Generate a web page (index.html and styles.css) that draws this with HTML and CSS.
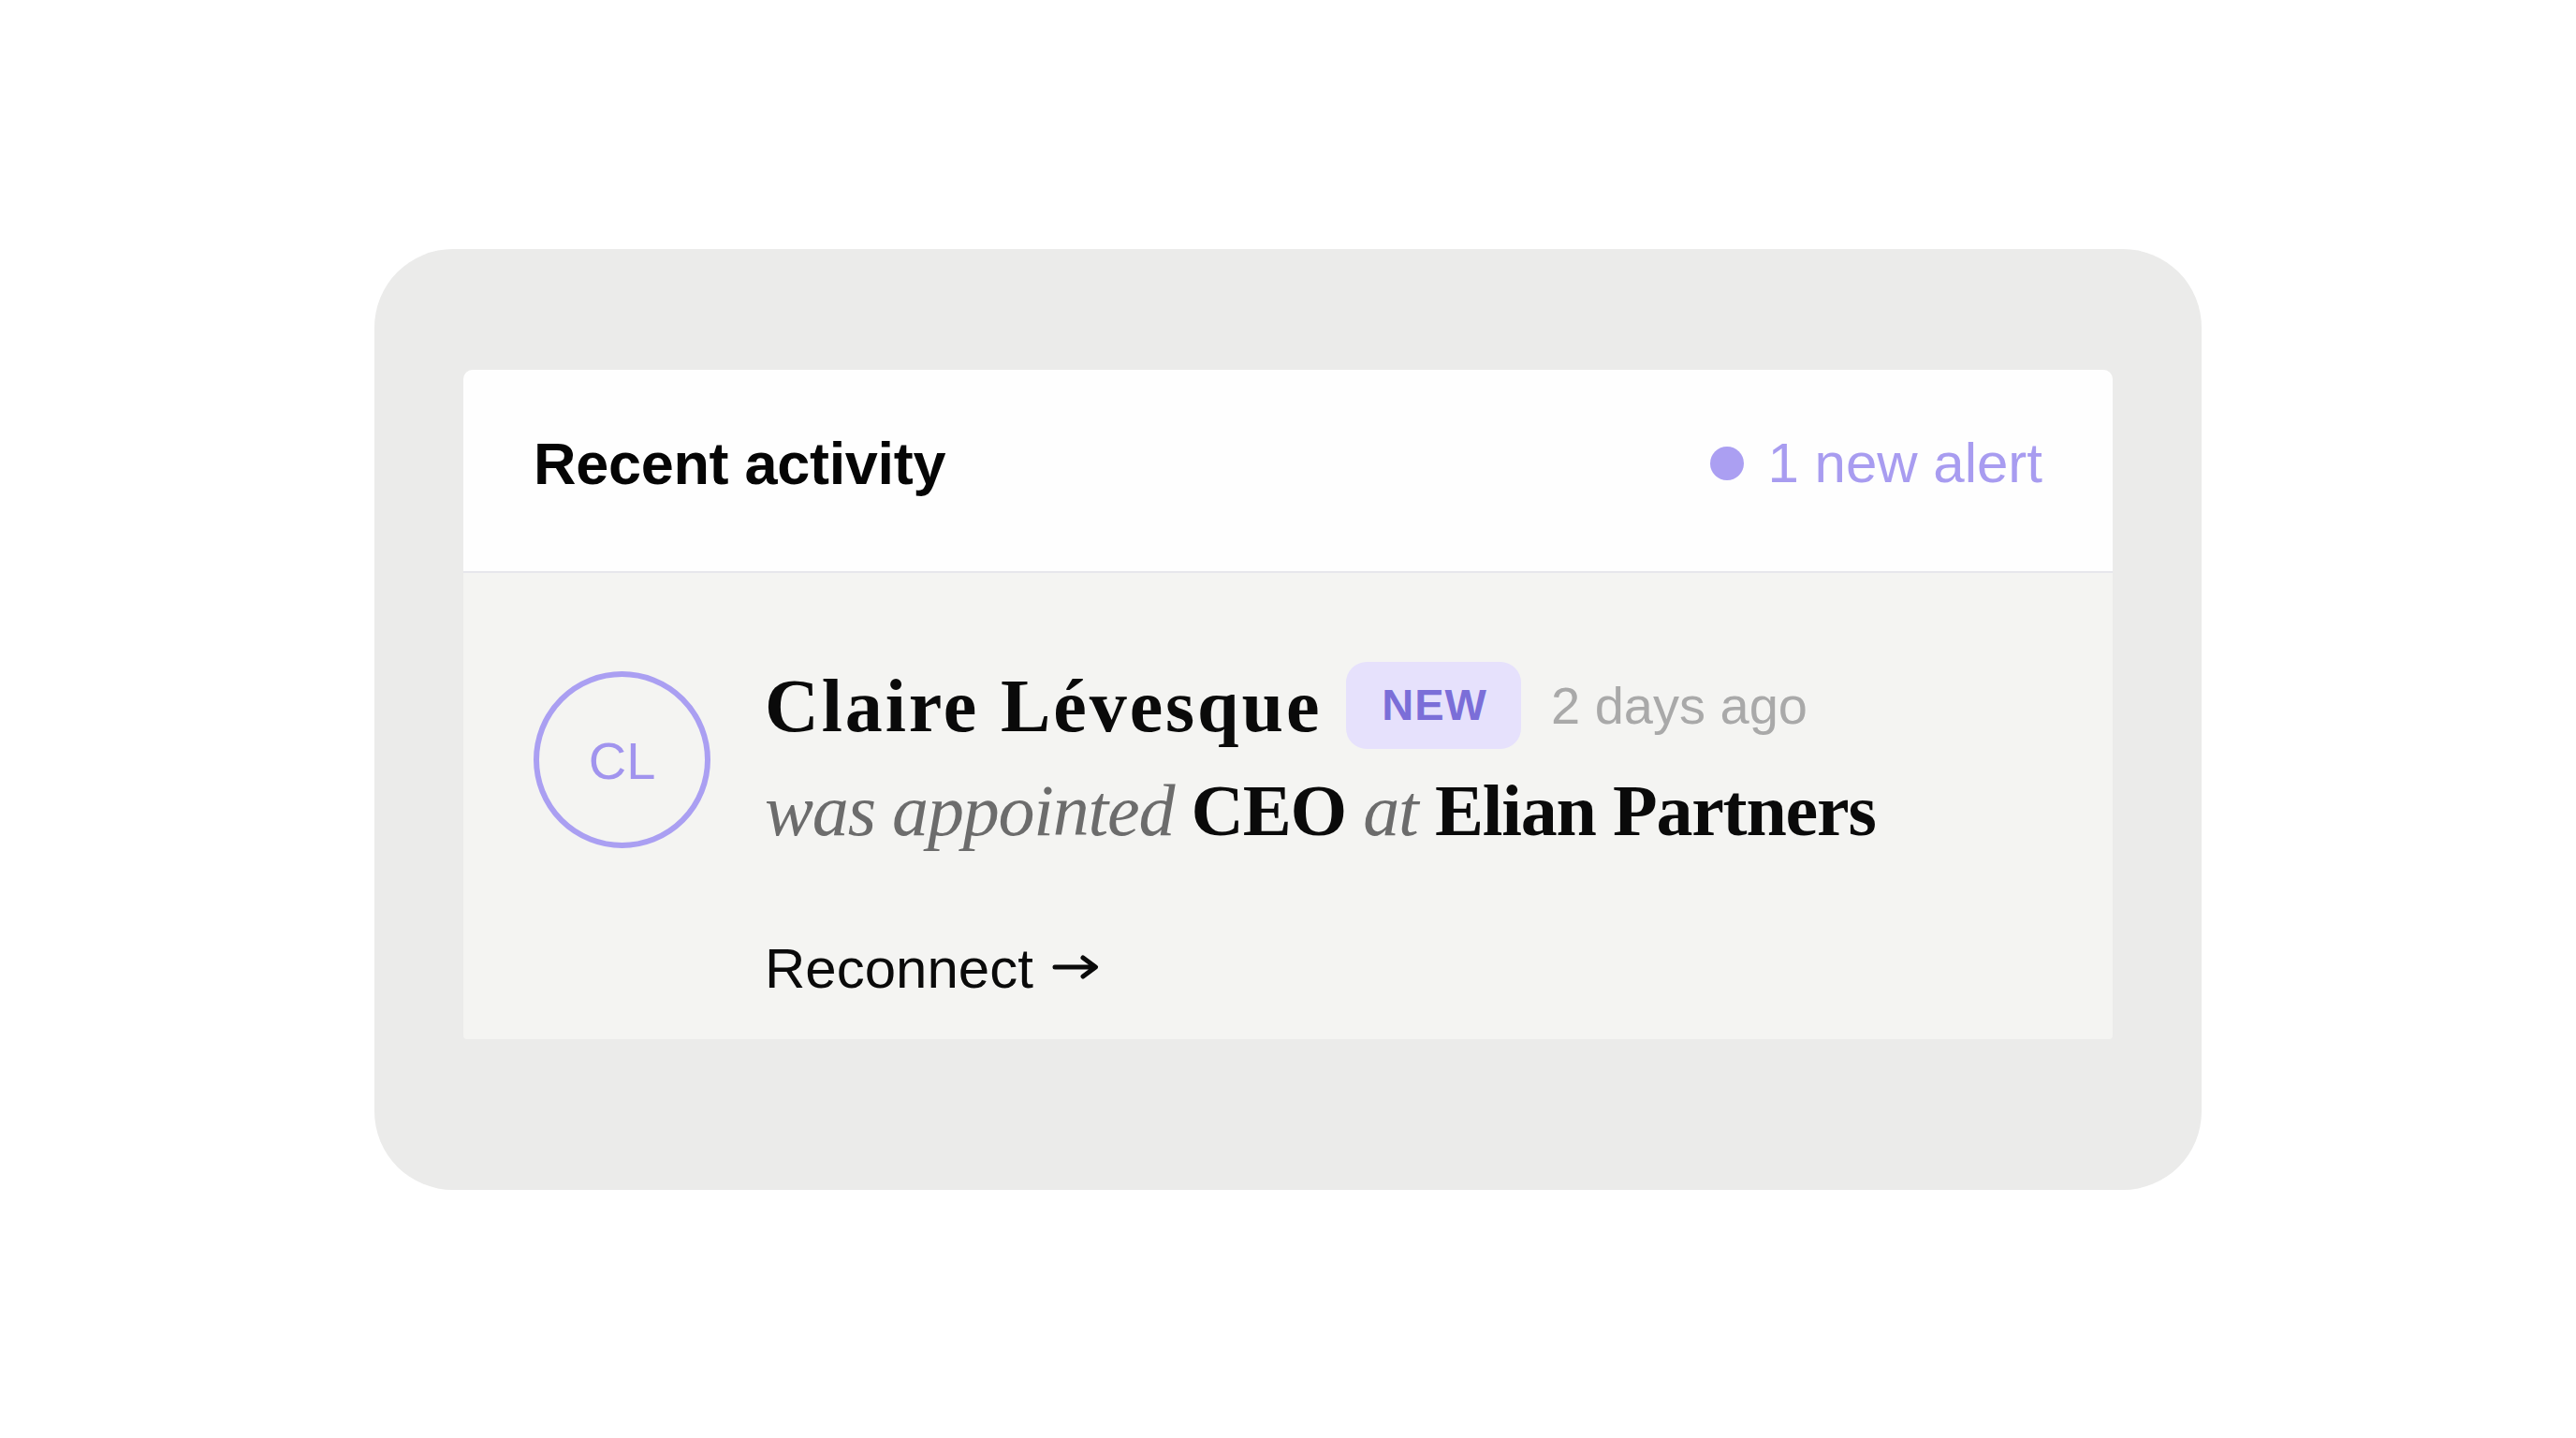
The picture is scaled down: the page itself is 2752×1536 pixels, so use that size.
FILE: index.html
```html
<!DOCTYPE html>
<html lang="en">
<head>
<meta charset="utf-8">
<title>Recent activity</title>
<link rel="stylesheet" href="styles.css">
</head>
<body>
<main class="frame">
  <section class="card">
    <header class="card-head">
      <h1 class="title">Recent activity</h1>
      <div class="alert"><span class="alert-dot"></span><span class="alert-text">1 new alert</span></div>
    </header>
    <div class="card-body">
      <div class="avatar"><span>CL</span></div>
      <div class="content">
        <div class="row-top">
          <span class="name">Claire Lévesque</span>
          <span class="badge">NEW</span>
          <span class="time">2 days ago</span>
        </div>
        <p class="event"><em>was appointed</em> <strong>CEO</strong> <em>at</em> <strong>Elian Partners</strong></p>
        <a class="action" href="#">Reconnect<svg class="arrow" width="50" height="26" viewBox="0 0 50 26" aria-hidden="true"><path d="M3 13 H46 M33 3 L46.5 13 L33 23" fill="none" stroke="#0a0a0a" stroke-width="5" stroke-linecap="round" stroke-linejoin="round"/></svg></a>
      </div>
    </div>
  </section>
</main>
</body>
</html>
```
FILE: styles.css
```css
html, body {
  margin: 0;
  padding: 0;
  background: #ffffff;
}
body {
  height: 100vh;
  display: flex;
  align-items: center;
  justify-content: center;
  font-family: "Liberation Sans", Arial, sans-serif;
}
.frame {
  width: 1952px;
  box-sizing: border-box;
  padding: 129px 95px 161px;
  background: #ebebea;
  border-radius: 84px;
}
.card {
  border-radius: 10px 10px 4px 4px;
  overflow: hidden;
  background: #f4f4f2;
}
.card-head {
  display: flex;
  justify-content: space-between;
  align-items: center;
  padding: 63px 75px 78px;
  background: #fefefe;
  border-bottom: 2px solid #e7e7ec;
}
.title {
  margin: 0;
  font-size: 63px;
  line-height: 74px;
  font-weight: 700;
  color: #050505;
  letter-spacing: -0.3px;
}
.alert {
  display: flex;
  align-items: center;
  gap: 26px;
  color: #a89cf0;
}
.alert-dot {
  width: 36px;
  height: 36px;
  border-radius: 50%;
  background: #ab9ff2;
}
.alert-text {
  font-size: 60px;
  line-height: 74px;
}
.card-body {
  display: flex;
  align-items: flex-start;
  gap: 58px;
  padding: 95px 75px 41px;
}
.avatar {
  flex: none;
  margin-top: 10px;
  width: 189px;
  height: 189px;
  box-sizing: border-box;
  border: 6px solid #aa9ff2;
  border-radius: 50%;
  display: flex;
  align-items: center;
  justify-content: center;
  color: #a194ee;
  font-size: 56px;
}
.avatar span {
  padding-top: 2px;
}
.content {
  display: flex;
  flex-direction: column;
  align-items: flex-start;
}
.row-top {
  display: flex;
  align-items: center;
  height: 94px;
}
.name {
  font-family: "Liberation Serif", "Times New Roman", serif;
  font-weight: 700;
  font-size: 80px;
  line-height: 94px;
  color: #0a0a0a;
  letter-spacing: 2.9px;
}
.badge {
  margin-left: 26px;
  padding: 19px 36px 20px 38px;
  border-radius: 22px;
  background: #e6e1fc;
  color: #7b6ed8;
  font-weight: 700;
  font-size: 47px;
  line-height: 54px;
  letter-spacing: 1px;
}
.time {
  margin-left: 32px;
  font-size: 56px;
  color: #a9a9a9;
}
.event {
  margin: 18px 0 0;
  font-family: "Liberation Serif", "Times New Roman", serif;
  font-size: 78px;
  line-height: 94px;
  color: #0a0a0a;
  letter-spacing: -1.2px;
}
.event em {
  color: #6c6c6c;
  font-style: italic;
}
.event strong {
  font-weight: 700;
}
.action {
  margin-top: 87px;
  display: flex;
  align-items: center;
  gap: 20px;
  font-size: 60px;
  line-height: 69px;
  color: #0a0a0a;
  text-decoration: none;
}
.arrow {
  flex: none;
  margin-top: -3px;
}
```
